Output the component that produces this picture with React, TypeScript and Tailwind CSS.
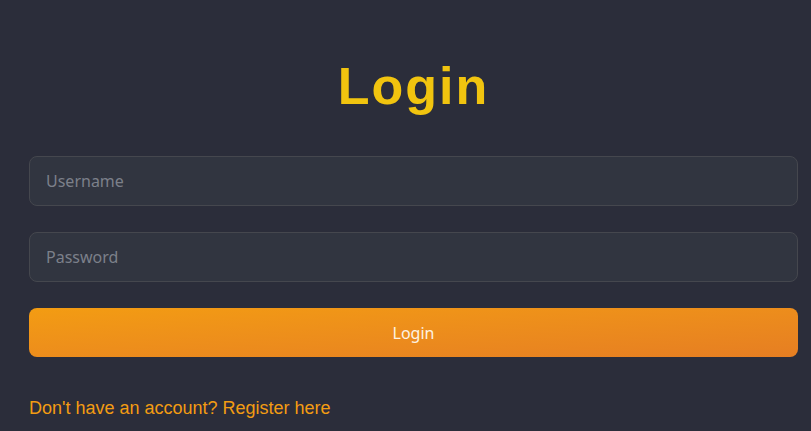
import { useState } from "react";

export default function App() {
  const [username, setUsername] = useState("");
  const [password, setPassword] = useState("");

  return (
    <div className="min-h-[431px] w-full bg-[#2b2d3a] pl-[29px] pr-[13px] pt-[56px]">
      <h1 className="text-center font-['Liberation_Sans',Arial,sans-serif] text-[52px] font-bold leading-[60px] tracking-[2px] text-[#f1c40f]">
        Login
      </h1>

      <div className="mt-[40px] flex flex-col gap-[26px] font-['Noto_Sans',sans-serif]">
        <input
          placeholder="Username"
          value={username}
          onChange={(e) => setUsername(e.target.value)}
          className="h-[50px] w-full rounded-lg border border-[#45474e] bg-[#313540] px-4 text-base text-white outline-none placeholder:text-[#7c808a]"
        />
        <input
          type="password"
          placeholder="Password"
          value={password}
          onChange={(e) => setPassword(e.target.value)}
          className="h-[50px] w-full rounded-lg border border-[#45474e] bg-[#313540] px-4 text-base text-white outline-none placeholder:text-[#7c808a]"
        />
        <button className="h-[49px] w-full rounded-lg bg-gradient-to-br from-[#f39c12] to-[#e67e22] text-base text-[#fdf3e3]">
          Login
        </button>
      </div>

      <p className="mt-[40px] font-['Liberation_Sans',Arial,sans-serif] text-[18px] leading-[22px] text-[#f39c12]">
        Don't have an account? Register here
      </p>
    </div>
  );
}
